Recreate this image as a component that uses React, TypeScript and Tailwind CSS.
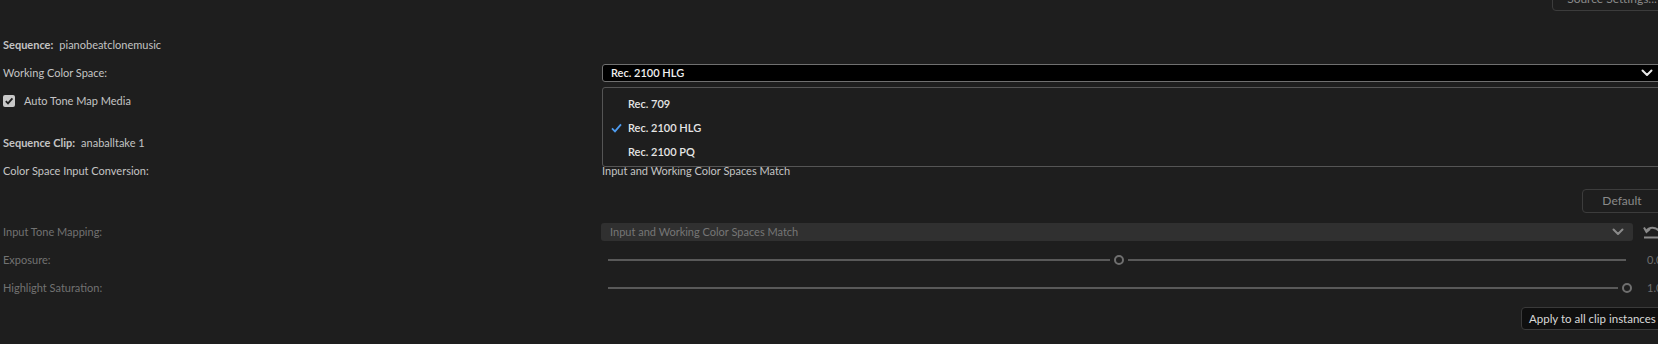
import React from 'react';

const Chevron: React.FC<{ className?: string }> = ({ className }) => (
  <svg width="12" height="8" viewBox="0 0 12 8" className={className}>
    <path d="M1.5 1.5 L6 6 L10.5 1.5" fill="none" stroke="currentColor" strokeWidth="2" strokeLinecap="round" strokeLinejoin="round" />
  </svg>
);

// pos = handle centre, measured from the track's left end
const Slider: React.FC<{ pos: number }> = ({ pos }) => (
  <div className="h-[12px] w-[1018px] shrink-0 ml-[6px] flex items-center">
    <div className="h-[2px] bg-[#595959] shrink-0" style={{ width: pos - 9 }} />
    <div className="w-[10px] h-[10px] rounded-full border-2 border-[#6f6f6f] mx-[4px] shrink-0" />
    <div className="h-[2px] bg-[#595959] flex-1" />
  </div>
);

const App: React.FC = () => {
  const options = [
    { label: 'Rec. 709', checked: false },
    { label: 'Rec. 2100 HLG', checked: true },
    { label: 'Rec. 2100 PQ', checked: false },
  ];

  return (
    <div className="w-[1658px] h-[344px] overflow-hidden bg-[#1e1e1e] text-[11px] text-[#c4c4c4] font-['Lato',sans-serif]">
      {/* top button row */}
      <div className="h-[31px] flex justify-end">
        <div className="h-[24px] -mt-[13px] w-[120px] shrink-0 -mr-[14px] border border-[#3c3c3c] rounded-[4px] flex items-center justify-center text-[#8a8a8a] text-[12px]">
          Source Settings...
        </div>
      </div>

      <div className="flex pl-[3px]">
        {/* labels */}
        <div className="w-[599px] shrink-0 flex flex-col">
          <div className="h-[28px] flex items-center">
            <span className="font-bold">Sequence:</span>
            <span className="ml-[6px]">pianobeatclonemusic</span>
          </div>
          <div className="h-[28px] flex items-center">Working Color Space:</div>
          <div className="h-[28px] flex items-center">
            <div className="w-[12px] h-[12px] rounded-[2px] bg-[#c8c8c8] flex items-center justify-center">
              <svg width="10" height="10" viewBox="0 0 10 10">
                <path d="M1.8 5.2 L4 7.4 L8.4 2.4" fill="none" stroke="#1e1e1e" strokeWidth="1.8" />
              </svg>
            </div>
            <span className="ml-[9px]">Auto Tone Map Media</span>
          </div>
          <div className="h-[14px]" />
          <div className="h-[28px] flex items-center">
            <span className="font-bold">Sequence Clip:</span>
            <span className="ml-[6px]">anaballtake 1</span>
          </div>
          <div className="h-[29px] flex items-center">Color Space Input Conversion:</div>
          <div className="h-[32px]" />
          <div className="h-[28px] flex items-center text-[#727272]">Input Tone Mapping:</div>
          <div className="h-[28px] flex items-center text-[#727272]">Exposure:</div>
          <div className="h-[28px] flex items-center text-[#727272]">Highlight Saturation:</div>
        </div>

        {/* controls */}
        <div className="flex-1 flex flex-col">
          <div className="h-[28px]" />
          <div className="h-[28px] flex items-center relative">
            <div className="w-[1064px] shrink-0 h-[18px] bg-black border border-[#707070] rounded-[3px] flex items-center justify-between pl-[8px] pr-[12px] text-[#f0f0f0] font-semibold">
              <span>Rec. 2100 HLG</span>
              <Chevron className="text-[#e8e8e8]" />
            </div>
            {/* open menu */}
            <div className="absolute left-0 top-[28px] w-[1064px] h-[80px] bg-[#1e1e1e] border border-[#555555] rounded-[3px] pt-[4px] z-10">
              {options.map((o) => (
                <div key={o.label} className="h-[24px] flex items-center text-[#e6e6e6] font-semibold">
                  <div className="w-[25px] pl-[8px] shrink-0">
                    {o.checked && (
                      <svg width="11" height="10" viewBox="0 0 11 10">
                        <path d="M1 5.4 L4 8.4 L10 1.4" fill="none" stroke="#4e9cf0" strokeWidth="1.8" />
                      </svg>
                    )}
                  </div>
                  <span>{o.label}</span>
                </div>
              ))}
            </div>
          </div>
          <div className="h-[28px]" />
          <div className="h-[14px]" />
          <div className="h-[28px]" />
          <div className="h-[29px] flex items-center">Input and Working Color Spaces Match</div>
          <div className="h-[32px] flex items-start">
            <div className="h-[24px] w-[80px] ml-[980px] shrink-0 mt-[3px] border border-[#3c3c3c] rounded-[4px] flex items-center justify-center text-[#8a8a8a] text-[12px]">
              Default
            </div>
          </div>
          <div className="h-[28px] flex items-center -ml-[1px]">
            <div className="w-[1032px] shrink-0 h-[18px] bg-[#303030] rounded-[3px] flex items-center justify-between pl-[9px] pr-[9px] text-[#767676]">
              <span>Input and Working Color Spaces Match</span>
              <Chevron className="text-[#8a8a8a]" />
            </div>
            <svg width="18" height="14" viewBox="0 0 18 14" className="ml-[10px] shrink-0 text-[#8a8a8a]">
              <path d="M3 6 C6 1.5, 13 1.5, 16 6" fill="none" stroke="currentColor" strokeWidth="2" />
              <path d="M1 2.5 L3.5 7 L7 4" fill="none" stroke="currentColor" strokeWidth="2" />
              <path d="M1 12.5 H18" stroke="currentColor" strokeWidth="2" />
            </svg>
          </div>
          <div className="h-[28px] flex items-center">
            <Slider pos={511} />
            <span className="ml-[21px] text-[#6e6e6e]">0.0</span>
          </div>
          <div className="h-[28px] flex items-center">
            <Slider pos={1019} />
            <span className="ml-[21px] text-[#6e6e6e]">1.0</span>
          </div>
          <div className="flex mt-[5px]">
            <div className="h-[23px] shrink-0 ml-[919px] bg-[#0f0f0f] border border-[#3a3a3a] rounded-[4px] px-[7px] flex items-center text-[#d8d8d8] text-[11.5px]">
              Apply to all clip instances
            </div>
          </div>
        </div>
      </div>
    </div>
  );
};

export default App;
